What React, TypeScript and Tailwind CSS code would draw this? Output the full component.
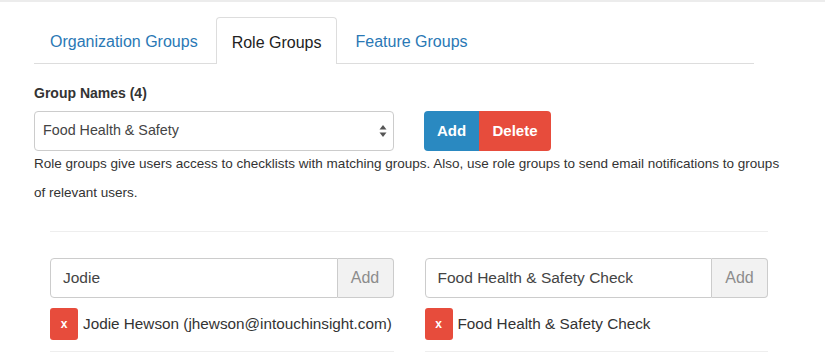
const FONT = "font-['Liberation_Sans','Helvetica_Neue',Arial,sans-serif]"

function SortArrows() {
  return (
    <svg width="8" height="14" viewBox="0 0 8 14" aria-hidden>
      <path d="M4 1 L7.5 5.5 H0.5 Z" fill="#555" />
      <path d="M4 13 L7.5 8.5 H0.5 Z" fill="#555" />
    </svg>
  )
}

function MemberColumn({ query, item }: { query: string; item: string }) {
  return (
    <div className="flex flex-col">
      <div className="flex h-[40px] w-full">
        <div className="flex flex-1 items-center rounded-l-[4px] border border-[#cccccc] bg-white pl-[12px] text-[15.5px] text-[#444]">
          {query}
        </div>
        <div className="flex w-[56px] items-center justify-center rounded-r-[4px] border border-l-0 border-[#cccccc] bg-[#f2f2f2] text-[16px] text-[#8c8c8c]">
          Add
        </div>
      </div>
      <div className="mt-[10px] flex items-center gap-[5px]">
        <button
          type="button"
          className="flex h-[32px] w-[28px] shrink-0 items-center justify-center rounded-[3px] bg-[#e74c3c] text-[12px] font-bold text-white"
        >
          x
        </button>
        <span className="whitespace-nowrap text-[15.3px] text-[#333]">{item}</span>
      </div>
      <div className="mt-[11px] h-px w-full bg-[#eeeeee]" />
    </div>
  )
}

export default function App() {
  return (
    <div className={`${FONT} h-[364px] w-[825px] overflow-hidden border-t-2 border-[#ececec] bg-white`}>
      <div className="pl-[34px]">
        <nav className="mt-[15px] flex h-[47px] w-[720px] border-b border-[#dddddd] text-[16px]">
          <div className="flex items-center px-[16px] pt-[3px] text-[#2a78b5]">Organization Groups</div>
          <div className="ml-[2px] -mb-px flex items-center rounded-t-[4px] border border-b-0 border-[#dddddd] bg-white px-[15px] pt-[3px] text-[#222]">
            Role Groups
          </div>
          <div className="ml-[2px] flex items-center px-[16px] pt-[3px] text-[#2a78b5]">Feature Groups</div>
        </nav>

        <div className="mt-[19px] text-[14px] font-bold leading-[20px] text-[#333]">Group Names (4)</div>

        <div className="mt-[8px] flex h-[40px] items-stretch">
          <div className="flex w-[360px] items-center justify-between rounded-[4px] border border-[#cccccc] bg-white pl-[8px] pr-[6px] text-[14.3px] text-[#444]">
            <span>Food Health &amp; Safety</span>
            <SortArrows />
          </div>
          <div className="ml-[30px] flex">
            <button
              type="button"
              className="w-[55px] rounded-l-[4px] bg-[#2a89c1] text-[15px] font-bold text-white"
            >
              Add
            </button>
            <button
              type="button"
              className="w-[72px] rounded-r-[4px] bg-[#e74c3c] text-[15px] font-bold text-white"
            >
              Delete
            </button>
          </div>
        </div>

        <p className="-mt-[2px] w-[755px] text-[13.5px] leading-[29px] text-[#333]">
          Role groups give users access to checklists with matching groups. Also, use role groups to send email
          notifications to groups of relevant users.
        </p>
      </div>

      <div className="ml-[50px] mt-[24px] w-[718px]">
        <div className="h-px w-full bg-[#eeeeee]" />
        <div className="mt-[26px] grid grid-cols-2 gap-x-[31px]">
          <MemberColumn query="Jodie" item="Jodie Hewson (jhewson@intouchinsight.com)" />
          <MemberColumn query="Food Health & Safety Check" item="Food Health & Safety Check" />
        </div>
      </div>
    </div>
  )
}
